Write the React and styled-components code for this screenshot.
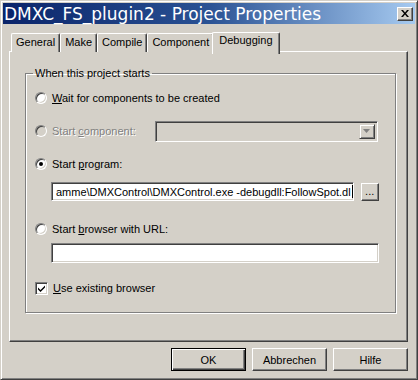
import styled, { createGlobalStyle } from "styled-components";

const GlobalStyle = createGlobalStyle`
  html, body {
    margin: 0;
    padding: 0;
    background: #d4d0c8;
  }
  body {
    font-family: "Liberation Sans", Arial, sans-serif;
    font-size: 11px;
    color: #000;
  }
`;

const Window = styled.div`
  width: 418px;
  height: 380px;
  box-sizing: border-box;
  background: #d4d0c8;
  border: 1px solid #d4d0c8;
  border-right-color: #404040;
  border-bottom-color: #404040;
  box-shadow: inset 1px 1px 0 #fff, inset -1px -1px 0 #808080;
  padding: 2px;
  display: flex;
  flex-direction: column;
`;

const TitleBar = styled.div`
  height: 21px;
  background: linear-gradient(to right, #0a246a 0%, #2a5294 50%, #a6caf0 100%);
  display: flex;
  align-items: center;
  justify-content: space-between;
  padding: 0 2px 0 1px;
`;

const Title = styled.span`
  color: #fff;
  font-family: "DejaVu Sans", Verdana, sans-serif;
  font-size: 17px;
  white-space: nowrap;
`;

const CloseButton = styled.div`
  width: 16px;
  height: 14px;
  background: #d4d0c8;
  box-sizing: border-box;
  border: 1px solid #fff;
  border-right-color: #404040;
  border-bottom-color: #404040;
  box-shadow: inset -1px -1px 0 #808080;
  display: flex;
  align-items: center;
  justify-content: center;
`;

const Body = styled.div`
  flex: 1;
  display: flex;
  flex-direction: column;
  padding: 8px 7px 0 6px;
`;

const TabStrip = styled.div`
  display: flex;
  align-items: flex-end;
  height: 20px;
  padding-left: 2px;
  position: relative;
  z-index: 1;
  margin-bottom: -1px;
`;

const Tab = styled.div`
  box-sizing: border-box;
  height: ${({ $active }) => ($active ? "22px" : "19px")};
  margin: ${({ $active }) => ($active ? "0 -2px 0 -2px" : "0")};
  padding: ${({ $active }) => ($active ? "1px 6px 0" : "2px 4px 0")};
  background: #d4d0c8;
  border-top: 1px solid #fff;
  border-left: 1px solid #fff;
  border-right: 1px solid #404040;
  border-radius: 2px 2px 0 0;
  box-shadow: inset -1px 0 0 #808080;
  white-space: nowrap;
  position: relative;
  z-index: ${({ $active }) => ($active ? 2 : 0)};
  align-self: ${({ $active }) => ($active ? "flex-start" : "flex-end")};
`;

const TabPanel = styled.div`
  height: 291px;
  box-sizing: border-box;
  border: 1px solid #fff;
  border-right-color: #404040;
  border-bottom-color: #404040;
  box-shadow: inset -1px -1px 0 #808080;
  padding: 15px 15px 0 15px;
`;

const Group = styled.fieldset`
  margin: 0;
  height: 246px;
  box-sizing: border-box;
  border: 1px solid #808080;
  box-shadow: 1px 1px 0 #fff, inset 1px 1px 0 #fff;
  padding: 0 16px 0 9px;
`;

const Legend = styled.legend`
  padding: 0 2px;
  margin-left: -2px;
`;

const Row = styled.div`
  display: flex;
  align-items: center;
  height: 16px;
  margin-top: ${({ $mt }) => $mt}px;
  color: ${({ $disabled }) => ($disabled ? "#808080" : "#000")};
  text-shadow: ${({ $disabled }) => ($disabled ? "1px 1px 0 #fff" : "none")};
`;

const Radio = styled.span`
  width: 12px;
  height: 12px;
  box-sizing: border-box;
  border-radius: 50%;
  background: ${({ $disabled }) => ($disabled ? "#d4d0c8" : "#fff")};
  border: 1px solid;
  border-color: #808080 #fff #fff #808080;
  box-shadow: inset 1px 1px 0 #404040, inset -1px -1px 0 #d4d0c8;
  display: flex;
  align-items: center;
  justify-content: center;
  margin-right: 5px;
  flex: none;
  &::after {
    content: "";
    width: 4px;
    height: 4px;
    border-radius: 50%;
    background: #000;
    display: ${({ $checked }) => ($checked ? "block" : "none")};
  }
`;

const Check = styled.span`
  width: 13px;
  height: 13px;
  box-sizing: border-box;
  background: #fff;
  border: 1px solid;
  border-color: #808080 #fff #fff #808080;
  box-shadow: inset 1px 1px 0 #404040, inset -1px -1px 0 #d4d0c8;
  display: flex;
  align-items: center;
  justify-content: center;
  margin-right: 5px;
  flex: none;
`;

const Label = styled.span`
  white-space: nowrap;
  & u {
    text-decoration: underline;
  }
`;

const Combo = styled.div`
  width: 223px;
  height: 21px;
  flex: none;
  box-sizing: border-box;
  margin-left: auto;
  margin-right: 1px;
  background: #d4d0c8;
  border: 1px solid;
  border-color: #808080 #fff #fff #808080;
  box-shadow: inset 1px 1px 0 #404040;
  display: flex;
  justify-content: flex-end;
  padding: 2px;
`;

const ComboButton = styled.div`
  width: 16px;
  height: 15px;
  box-sizing: border-box;
  border: 1px solid;
  border-color: #d4d0c8 #404040 #404040 #d4d0c8;
  box-shadow: inset 1px 1px 0 #fff, inset -1px -1px 0 #808080;
  display: flex;
  align-items: center;
  justify-content: center;
`;

const FieldRow = styled.div`
  display: flex;
  align-items: center;
  gap: 7px;
  margin-top: ${({ $mt }) => $mt}px;
  margin-left: 16px;
`;

const TextInput = styled.div`
  flex: 1;
  height: ${({ $h }) => $h || 19}px;
  box-sizing: border-box;
  background: #fff;
  border: 1px solid;
  border-color: #808080 #fff #fff #808080;
  box-shadow: inset 1px 1px 0 #404040, inset -1px -1px 0 #d4d0c8;
  display: flex;
  align-items: center;
  padding-left: 4px;
  overflow: hidden;
  white-space: nowrap;
`;

const Caret = styled.span`
  display: inline-block;
  width: 1px;
  height: 13px;
  background: #000;
  margin-left: 1px;
`;

const SmallButton = styled.div`
  width: 18px;
  height: 18px;
  box-sizing: border-box;
  border: 1px solid;
  border-color: #fff #404040 #404040 #fff;
  box-shadow: inset -1px -1px 0 #808080;
  display: flex;
  align-items: flex-end;
  justify-content: center;
  padding-bottom: 3px;
  line-height: 1;
`;

const ButtonRow = styled.div`
  display: flex;
  justify-content: flex-end;
  gap: 6px;
  margin-top: 6px;
`;

const Button = styled.div`
  width: 75px;
  height: 23px;
  box-sizing: border-box;
  border: 1px solid;
  border-color: ${({ $default }) =>
    $default ? "#000" : "#fff #404040 #404040 #fff"};
  box-shadow: ${({ $default }) =>
    $default
      ? "inset 1px 1px 0 #fff, inset -1px -1px 0 #404040, inset -2px -2px 0 #808080"
      : "inset -1px -1px 0 #808080"};
  display: flex;
  align-items: center;
  justify-content: center;
`;

export default function App() {
  return (
    <>
      <GlobalStyle />
      <Window>
        <TitleBar>
          <Title>DMXC_FS_plugin2 - Project Properties</Title>
          <CloseButton>
            <svg width="8" height="7" viewBox="0 0 8 7">
              <path d="M0 0h2l2 2.5L6 0h2L5 3.5 8 7H6L4 4.5 2 7H0l3-3.5z" fill="#000" />
            </svg>
          </CloseButton>
        </TitleBar>
        <Body>
          <TabStrip>
            <Tab>General</Tab>
            <Tab>Make</Tab>
            <Tab>Compile</Tab>
            <Tab>Component</Tab>
            <Tab $active>Debugging</Tab>
          </TabStrip>
          <TabPanel>
            <Group>
              <Legend>When this project starts</Legend>
              <Row $mt={11}>
                <Radio />
                <Label>
                  <u>W</u>ait for components to be created
                </Label>
              </Row>
              <Row $mt={17} $disabled>
                <Radio $disabled />
                <Label>
                  Start <u>c</u>omponent:
                </Label>
                <Combo>
                  <ComboButton>
                    <svg width="7" height="4" viewBox="0 0 7 4">
                      <path d="M0 0h7L3.5 4z" fill="#808080" />
                    </svg>
                  </ComboButton>
                </Combo>
              </Row>
              <Row $mt={17}>
                <Radio $checked />
                <Label>
                  Start <u>p</u>rogram:
                </Label>
              </Row>
              <FieldRow $mt={10}>
                <TextInput>
                  amme\DMXControl\DMXControl.exe -debugdll:FollowSpot.dl
                  <Caret />
                </TextInput>
                <SmallButton>...</SmallButton>
              </FieldRow>
              <Row $mt={20}>
                <Radio />
                <Label>
                  Start <u>b</u>rowser with URL:
                </Label>
              </Row>
              <FieldRow $mt={6}>
                <TextInput $h={20} />
              </FieldRow>
              <Row $mt={17}>
                <Check>
                  <svg width="7" height="7" viewBox="0 0 7 7">
                    <path d="M0 2.5l2.5 2.5L7 0.5v2L2.5 7 0 4.5z" fill="#000" />
                  </svg>
                </Check>
                <Label>
                  <u>U</u>se existing browser
                </Label>
              </Row>
            </Group>
          </TabPanel>
          <ButtonRow>
            <Button $default>OK</Button>
            <Button>Abbrechen</Button>
            <Button>Hilfe</Button>
          </ButtonRow>
        </Body>
      </Window>
    </>
  );
}
